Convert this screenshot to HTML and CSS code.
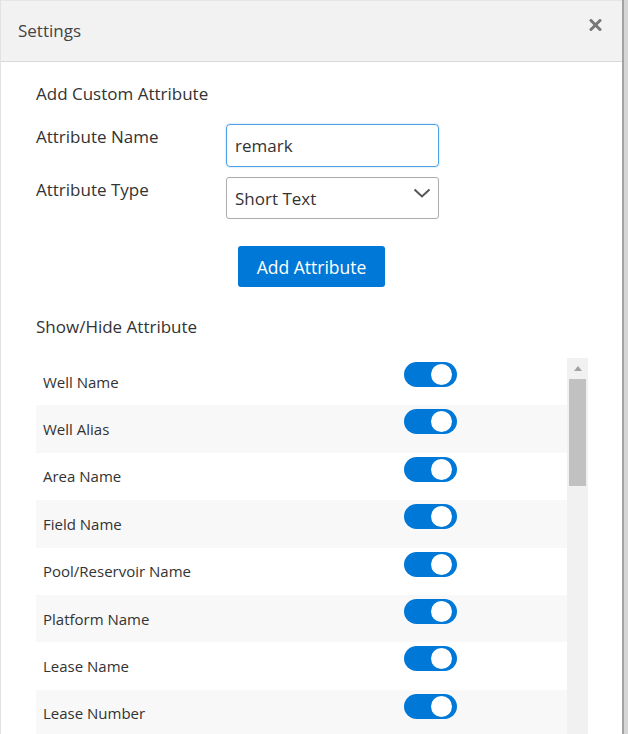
FILE: index.html
```html
<!DOCTYPE html>
<html lang="en">
<head>
<meta charset="utf-8">
<title>Settings</title>
<link rel="stylesheet" href="styles.css">
</head>
<body>
<div class="modal">
  <div class="modal-header">
    <span class="modal-title">Settings</span>
    <button class="close-btn" aria-label="Close">
      <svg width="13" height="12" viewBox="0 0 13 12"><path d="M2 1.5 L11 10.5 M11 1.5 L2 10.5" stroke="#777" stroke-width="3" stroke-linecap="round"/></svg>
    </button>
  </div>
  <div class="modal-body">
    <div class="section-title">Add Custom Attribute</div>
    <div class="form-row">
      <label class="form-label">Attribute Name</label>
      <div class="text-input">remark</div>
    </div>
    <div class="form-row form-row-select">
      <label class="form-label">Attribute Type</label>
      <div class="select-input">
        <span>Short Text</span>
        <svg class="chevron" width="18" height="10" viewBox="0 0 18 10"><path d="M1.5 1.5 L9 8.5 L16.5 1.5" fill="none" stroke="#555" stroke-width="2"/></svg>
      </div>
    </div>
    <div class="btn-row"><button class="btn-primary">Add Attribute</button></div>
    <div class="section-title section-title-2">Show/Hide Attribute</div>
    <div class="list-wrap">
      <div class="attr-list">
        <div class="attr-row"><span class="attr-name">Well Name</span><span class="toggle"><span class="knob"></span></span></div>
        <div class="attr-row"><span class="attr-name">Well Alias</span><span class="toggle"><span class="knob"></span></span></div>
        <div class="attr-row"><span class="attr-name">Area Name</span><span class="toggle"><span class="knob"></span></span></div>
        <div class="attr-row"><span class="attr-name">Field Name</span><span class="toggle"><span class="knob"></span></span></div>
        <div class="attr-row"><span class="attr-name">Pool/Reservoir Name</span><span class="toggle"><span class="knob"></span></span></div>
        <div class="attr-row"><span class="attr-name">Platform Name</span><span class="toggle"><span class="knob"></span></span></div>
        <div class="attr-row"><span class="attr-name">Lease Name</span><span class="toggle"><span class="knob"></span></span></div>
        <div class="attr-row"><span class="attr-name">Lease Number</span><span class="toggle"><span class="knob"></span></span></div>
      </div>
      <div class="scrollbar">
        <div class="scroll-arrow"></div>
        <div class="scroll-thumb"></div>
      </div>
    </div>
  </div>
</div>
</body>
</html>
```

FILE: styles.css
```css
html, body {
  margin: 0;
  padding: 0;
  height: 100%;
  overflow: hidden;
}
body {
  background: #d6d6d6;
  font-family: "Open Sans", "Liberation Sans", sans-serif;
  color: #333;
}
.modal {
  width: 624px;
  height: 100%;
  background: #fff;
  border-left: 1px solid #e2e2e2;
  border-right: 2px solid #a3a3a3;
  box-sizing: border-box;
  display: flex;
  flex-direction: column;
}
.modal-header {
  height: 62px;
  box-sizing: border-box;
  background: #f2f2f2;
  border-top: 1px solid #e6e6e6;
  border-bottom: 1px solid #d9d9d9;
  display: flex;
  align-items: center;
  justify-content: space-between;
  padding: 0 20px 6px 17px;
  flex-shrink: 0;
}
.modal-title {
  font-size: 17px;
  color: #444;
  padding-top: 4px;
}
.close-btn {
  border: 0;
  background: transparent;
  padding: 0;
  margin: 0;
  display: flex;
  margin-top: -6px;
}
.modal-body {
  padding: 20px 34px 0 35px;
  flex: 1;
  display: flex;
  flex-direction: column;
  min-height: 0;
}
.section-title {
  font-size: 17px;
  line-height: 24px;
  color: #333;
  margin-bottom: 18px;
}
.form-row {
  display: flex;
  align-items: flex-start;
  margin-bottom: 10px;
}
.form-label {
  width: 190px;
  font-size: 17px;
  line-height: 26px;
  color: #333;
}
.text-input, .select-input {
  width: 213px;
  box-sizing: border-box;
  font-size: 17px;
  color: #333;
  padding: 0 8px;
  display: flex;
  align-items: center;
}
.text-input {
  height: 43px;
  border: 1px solid #4d9fe6;
  border-radius: 4px;
  box-shadow: 0 0 2px rgba(77, 159, 230, 0.5);
}
.select-input {
  height: 42px;
  border: 1px solid #ababab;
  border-radius: 3px;
  justify-content: space-between;
  align-items: flex-start;
  padding-top: 8px;
}
.select-input span {
  padding-top: 1px;
}
.chevron {
  margin-top: 2px;
  margin-right: -1px;
}
.btn-row {
  display: flex;
  justify-content: center;
  margin-top: 17px;
  margin-left: -35px;
  margin-right: -34px;
}
.btn-primary {
  width: 147px;
  height: 41px;
  background: #0078d7;
  color: #fff;
  border: 0;
  border-radius: 3px;
  font-family: inherit;
  font-size: 17.5px;
  padding: 0;
}
.section-title-2 {
  margin-top: 28px;
  margin-bottom: 19px;
}
.list-wrap {
  display: flex;
  flex: 1;
  min-height: 0;
  overflow: hidden;
}
.attr-list {
  flex: 1;
}
.attr-row {
  height: 47.4px;
  display: flex;
  align-items: center;
  padding-left: 7px;
  font-size: 15px;
  color: #333;
}
.attr-row:nth-child(even) {
  background: #f8f8f8;
}
.attr-name {
  width: 361px;
}
.toggle {
  width: 53px;
  height: 25px;
  border-radius: 13px;
  background: #0078d7;
  display: flex;
  align-items: center;
  justify-content: flex-end;
  padding-right: 5px;
  box-sizing: border-box;
  align-self: flex-start;
  margin-top: 4px;
}
.knob {
  width: 21px;
  height: 21px;
  border-radius: 50%;
  background: #fff;
}
.scrollbar {
  width: 21px;
  background: #f1f1f1;
  display: flex;
  flex-direction: column;
  align-items: center;
}
.scroll-arrow {
  width: 0;
  height: 0;
  border-left: 4px solid transparent;
  border-right: 4px solid transparent;
  border-bottom: 5px solid #a3a3a3;
  margin-top: 8px;
}
.scroll-thumb {
  width: 17px;
  height: 107px;
  background: #c1c1c1;
  margin-top: 8px;
}
```
